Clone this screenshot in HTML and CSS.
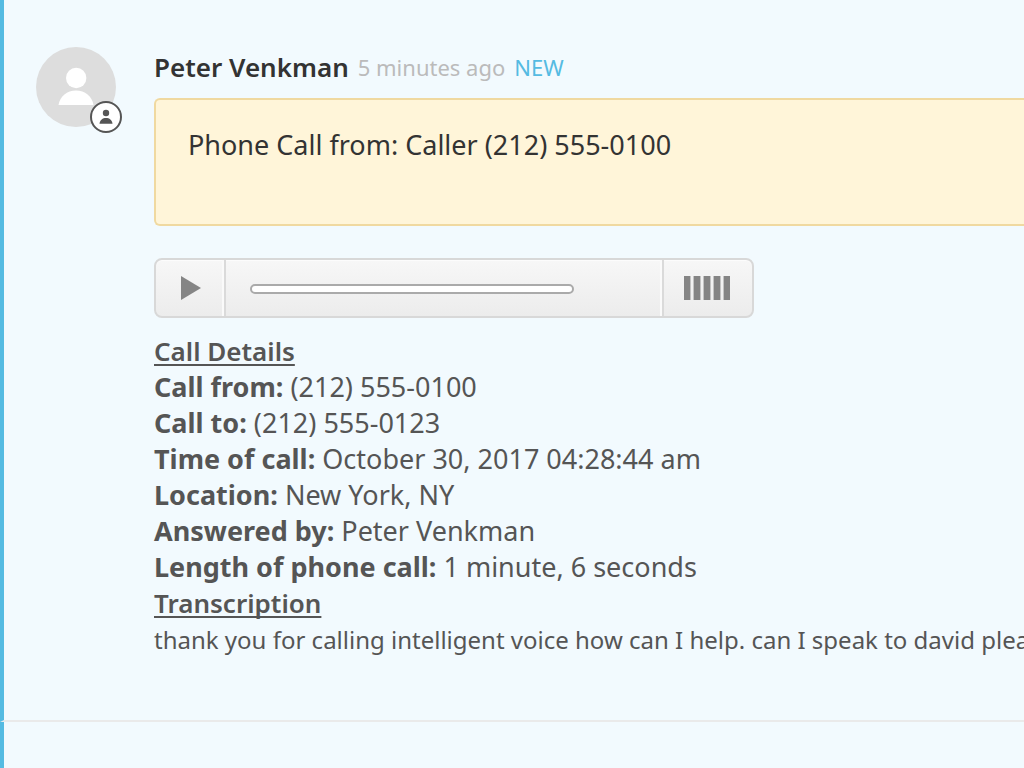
FILE: index.html
```html
<!DOCTYPE html>
<html lang="en">
<head>
<meta charset="utf-8">
<title>Ticket conversation</title>
<link rel="stylesheet" href="styles.css">
</head>
<body>
<main class="conversation">
  <article class="comment">
    <div class="avatar">
      <svg class="avatar-image" viewBox="0 0 80 80" aria-hidden="true">
        <circle cx="40" cy="40" r="40" fill="#ddd"/>
        <circle cx="40.200" cy="31" r="10.200" fill="#fff"/>
        <path d="M22.500 58C24 49 31 43.500 40 43.500S56 49 57.500 58Z" fill="#fff"/>
      </svg>
      <svg class="avatar-badge" viewBox="0 0 32 32" aria-hidden="true">
        <circle cx="16" cy="16" r="15" fill="#fff" stroke="#555" stroke-width="2"/>
        <circle cx="16" cy="12" r="3.200" fill="#555"/>
        <path d="M9.500 22.700C10 18.800 12.600 17 16 17S22 18.800 22.500 22.700Z" fill="#555"/>
      </svg>
    </div>
    <div class="comment-main">
      <header class="comment-header">
        <h2 class="author">Peter Venkman</h2>
        <time class="age">5 minutes ago</time>
        <span class="new">NEW</span>
      </header>
      <div class="note">Phone Call from: Caller (212) 555-0100</div>
      <div class="player">
        <button class="player-play" type="button" aria-label="Play">
          <svg class="play-icon" viewBox="0 0 20 24" aria-hidden="true"><path d="M0 0 20 12 0 24Z" fill="#858585"/></svg>
        </button>
        <div class="player-track">
          <input class="seek" type="range" min="0" max="66" value="0" aria-label="Seek">
        </div>
        <button class="player-volume" type="button" aria-label="Volume">
          <svg class="volume-icon" viewBox="0 0 46 24" aria-hidden="true"><path d="M0 0h6v24H0zM10 0h6v24h-6zM20 0h6v24h-6zM30 0h6v24h-6zM40 0h6v24h-6z" fill="#858585"/><path d="M6 0h1v24H6zM9 0h1v24H9zM16 0h1v24h-1zM19 0h1v24h-1zM26 0h1v24h-1zM29 0h1v24h-1zM36 0h1v24h-1zM39 0h1v24h-1z" fill="#c4c4c4"/></svg>
        </button>
      </div>
      <section class="details">
        <h3 class="details-title">Call Details</h3>
        <p><b>Call from:</b> (212) 555-0100</p>
        <p><b>Call to:</b> (212) 555-0123</p>
        <p><b>Time of call:</b> October 30, 2017 04:28:44 am</p>
        <p><b>Location:</b> New York, NY</p>
        <p><b>Answered by:</b> Peter Venkman</p>
        <p><b>Length of phone call:</b> 1 minute, 6 seconds</p>
        <h3 class="details-title">Transcription</h3>
        <p class="transcript">thank you for calling intelligent voice how can I help. can I speak to david please</p>
      </section>
    </div>
  </article>
  <div class="next-comment"></div>
</main>
</body>
</html>
```
FILE: styles.css
```css
* {
  box-sizing: border-box;
}

body {
  margin: 0;
  background: #f2fafe;
  color: #555;
  font-family: "Segoe UI", "Noto Sans", sans-serif;
  font-size: 27px;
  line-height: 36px;
}

h2, h3, p {
  margin: 0;
  font-size: inherit;
}

.conversation {
  display: flex;
  flex-direction: column;
  min-height: 100vh;
  overflow: hidden;
}

.comment {
  display: flex;
  gap: 38px;
  padding: 47px 0 61px 32px;
  border-left: 4px solid #55bbe2;
  border-bottom: 2px solid #eaeaea;
}

.next-comment {
  flex: 1;
  border-left: 4px solid #55bbe2;
}

.avatar {
  position: relative;
  flex: none;
  width: 80px;
  height: 80px;
}

.avatar-image {
  display: block;
  width: 80px;
  height: 80px;
}

.avatar-badge {
  position: absolute;
  right: -6px;
  bottom: -6px;
  width: 32px;
  height: 32px;
}

.comment-main {
  flex: 1;
  min-width: 0;
}

.comment-header {
  display: flex;
  align-items: center;
  gap: 9px;
  padding: 2px 0 13px;
}

.author {
  color: #333;
  font-size: 26px;
  font-weight: 600;
}

.age,
.new {
  font-size: 22px;
}

.age {
  color: #bbb;
}

.new {
  color: #55bbe2;
}

.note {
  min-height: 128px;
  padding: 27px 32px;
  border: 2px solid #f0d9a0;
  border-right: 0;
  border-radius: 6px 0 0 6px;
  background: #fff5d9;
  color: #333;
}

.player {
  display: flex;
  max-width: 600px;
  height: 60px;
  margin: 32px 0 15px;
  border: 2px solid #d8d8d8;
  border-radius: 8px;
  background: linear-gradient(#f7f7f7, #ececec);
  box-shadow: inset 0 1px 0 #fcfcfc;
}

.player-play,
.player-volume {
  display: flex;
  flex: none;
  align-items: center;
  justify-content: center;
  padding: 0;
  border: 0;
  background: none;
}

.player-play {
  width: 70px;
  padding-left: 2px;
  border-right: 2px solid #dadada;
  box-shadow: inset -2px 0 0 #fafafa;
}

.player-volume {
  width: 90px;
  padding-right: 2px;
  border-left: 2px solid #dadada;
  box-shadow: -2px 0 0 #fafafa;
}

.play-icon {
  width: 20px;
  height: 24px;
}

.volume-icon {
  width: 46px;
  height: 24px;
}

.player-track {
  display: flex;
  flex: 1;
  align-items: center;
  padding: 2px 88px 0 24px;
}

.seek {
  appearance: none;
  width: 100%;
  height: 10px;
  margin: 0;
  border: 2px solid #aaa;
  border-radius: 5px;
  background: #fff;
}

.seek::-webkit-slider-thumb {
  appearance: none;
  width: 0;
  height: 0;
}

.details-title {
  font-size: 26px;
  font-weight: 600;
  text-decoration: underline;
  text-decoration-thickness: 2px;
  text-underline-offset: 3px;
  text-decoration-skip-ink: none;
}

.transcript {
  font-size: 24px;
  line-height: 38px;
  white-space: nowrap;
}
```
